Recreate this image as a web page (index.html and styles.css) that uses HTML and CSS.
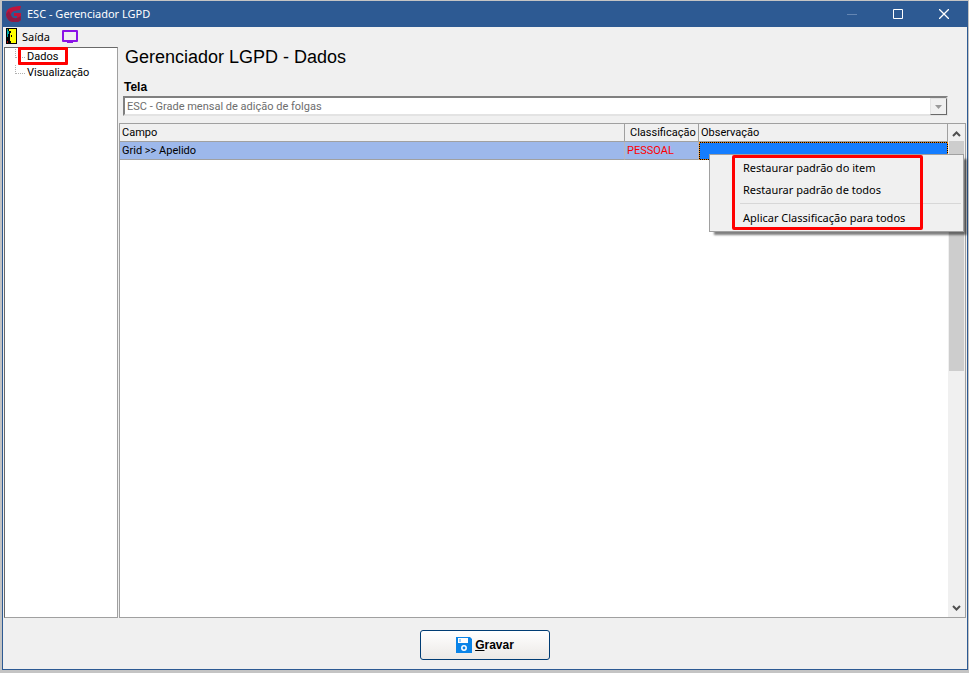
FILE: index.html
```html
<!doctype html>
<html lang="pt-BR">

<head>
  <meta charset="utf-8">
  <meta name="viewport" content="width=device-width, initial-scale=1">
  <title>ESC - Gerenciador LGPD</title>
  <link rel="stylesheet" href="styles.css">
</head>

<body>
  <div class="window">

    <header class="titlebar">
      <svg class="logo" width="18" height="18" viewBox="0 0 18 18">
        <path d="M14 1L8 2Q1 3 1 10Q2 16 8 17L13 17L16 15V8H9V11H12V13Q7 14 6 10Q6 7 9 6L15 5L16 1Z" fill="#c0143c"/>
        <path d="M1 9Q2 16 8 17L13 17L16 15V11L12 13Q7 14 6 10L4 6Z" fill="#8c1b45"/>
      </svg>
      <span class="title">ESC - Gerenciador LGPD</span>
      <button class="win-btn" aria-label="Minimizar" disabled>
        <svg width="10" height="10"><path d="M0 5.5H10" stroke="#6486b3"/></svg>
      </button>
      <button class="win-btn" aria-label="Maximizar">
        <svg width="10" height="10"><path d="M.5.5h9v9h-9z" fill="none" stroke="#fff"/></svg>
      </button>
      <button class="win-btn" aria-label="Fechar">
        <svg width="10" height="10"><path d="M0 0L10 10M10 0L0 10" stroke="#fff" stroke-width="1.3"/></svg>
      </button>
    </header>

    <nav class="menubar">
      <button class="menu-btn">
        <svg width="11" height="16" viewBox="0 0 11 16">
          <path d="M0 0H11V16H0Z" fill="#000"/>
          <path d="M3 1H10V15H5V13H4V5H5V3H3Z" fill="#ff0"/>
          <path d="M1 1H2V3H3V6H2V9H1Z" fill="#0aa"/>
          <path d="M1 13H2V15H1Z" fill="#a00"/>
          <path d="M5 7H6V9H5Z" fill="#000"/>
        </svg>
        Saída
      </button>
      <button class="menu-btn" aria-label="Tela">
        <svg width="16" height="13" viewBox="0 0 16 13">
          <path d="M1 1H15V11H1Z" fill="none" stroke="#8a14e6" stroke-width="2" stroke-linejoin="round"/>
          <path d="M5 11H11V13H5Z" fill="#8a14e6"/>
        </svg>
      </button>
    </nav>

    <div class="content">
      <aside class="sidebar">
        <ul class="tree">
          <li><a class="marked" href="#dados">Dados</a></li>
          <li><a href="#visualizacao">Visualização</a></li>
        </ul>
      </aside>

      <main class="panel">
        <div class="form">
          <h1>Gerenciador LGPD - Dados</h1>
          <label for="tela">Tela</label>
          <div class="combo">
            <select id="tela" disabled>
              <option>ESC - Grade mensal de adição de folgas</option>
            </select>
            <span class="combo-arrow"><svg width="7" height="4"><path d="M0 0H7L3.500 4Z" fill="#999"/></svg></span>
          </div>
        </div>

        <div class="grid">
          <div class="rows">
            <table>
              <thead>
                <tr>
                  <th>Campo</th>
                  <th class="col-class">Classificação</th>
                  <th class="col-obs">Observação</th>
                </tr>
              </thead>
              <tbody>
                <tr>
                  <td>Grid &gt;&gt; Apelido</td>
                  <td class="personal">PESSOAL</td>
                  <td class="active"></td>
                </tr>
              </tbody>
            </table>
          </div>
          <div class="scrollbar">
            <svg class="arrow" width="9" height="6"><path d="M1 5L4.500 1.500L8 5" fill="none" stroke="#505050" stroke-width="2"/></svg>
            <div class="thumb"></div>
            <svg class="arrow" width="9" height="6"><path d="M1 1L4.500 4.500L8 1" fill="none" stroke="#505050" stroke-width="2"/></svg>
          </div>

          <div class="context-menu">
            <button>Restaurar padrão do item</button>
            <button>Restaurar padrão de todos</button>
            <hr>
            <button>Aplicar Classificação para todos</button>
            <div class="highlight"></div>
          </div>
        </div>
      </main>
    </div>

    <footer class="footer">
      <button class="save">
        <svg width="16" height="16" viewBox="0 0 16 16">
          <path d="M0 0H14L16 2V16H0Z" fill="#0a84e8"/>
          <path d="M2 1H12V6H2Z" fill="#fff"/>
          <path d="M3 2H5V5H3Z" fill="#9fd0f7"/>
          <circle cx="8" cy="11" r="2.200" fill="none" stroke="#fff" stroke-width="1.500"/>
        </svg>
        <span><u>G</u>ravar</span>
      </button>
    </footer>

  </div>
</body>
</html>
```

FILE: styles.css
```css
*, *::before, *::after {
  box-sizing: border-box;
}

html, body {
  height: 100%;
  margin: 0;
}

body {
  padding: 1px 1px 3px 2px;
  background: #c4c4c4;
  font-family: Roboto, "Liberation Sans", Arial, sans-serif;
  font-size: 11px;
  color: #000;
}

button {
  border: 0;
  padding: 0;
  background: none;
  font: inherit;
  color: inherit;
}

svg {
  display: block;
}

.window {
  display: flex;
  flex-direction: column;
  height: 100%;
  border: 1px solid #2d5a93;
  background: #f0f0f0;
}

/* title bar */
.titlebar {
  display: flex;
  align-items: center;
  height: 25px;
  padding: 0 0 2px 2px;
  background: #2d5a93;
  color: #fff;
  font-family: "Noto Sans", "Segoe UI", sans-serif;
}

.title {
  flex: 1;
  margin-left: 4px;
}

.win-btn {
  display: flex;
  justify-content: center;
  width: 46px;
}

/* menu bar */
.menubar {
  display: flex;
  align-items: center;
  gap: 12px;
  height: 20px;
  padding: 0 0 2px 3px;
  font-family: "Noto Sans", "Segoe UI", sans-serif;
}

.menu-btn {
  display: flex;
  align-items: center;
  gap: 5px;
}

.content {
  display: flex;
  flex: 1;
  padding: 0 1px;
}

/* tree */
.sidebar {
  width: 114px;
  border: 1px solid #a0a0a0;
  border-top-color: #696969;
  border-left-color: #696969;
  background: #fff;
}

.tree {
  margin: 0;
  padding: 1px 0 0 10px;
  list-style: none;
}

.tree li {
  position: relative;
  height: 16px;
  padding-left: 12px;
  line-height: 16px;
}

.tree li::before {
  content: "";
  position: absolute;
  left: 0;
  top: 0;
  width: 10px;
  height: 9px;
  border: dotted #b0b0b0;
  border-width: 0 0 1px 1px;
}

.tree a {
  color: #000;
  text-decoration: none;
}

.marked::after {
  content: "";
  position: absolute;
  left: 3px;
  top: -2px;
  width: 50px;
  height: 18px;
  border: 3px solid #f00;
  border-radius: 1px;
}

/* right side */
.panel {
  display: flex;
  flex: 1;
  flex-direction: column;
  padding-left: 1px;
}

.form {
  padding: 0 18px 7px 4px;
}

h1 {
  margin: 0;
  padding-left: 2px;
  font-family: "Liberation Sans", Arial, sans-serif;
  font-size: 18px;
  font-weight: 400;
  line-height: 20px;
}

.form label {
  display: block;
  margin: 12px 0 1px 1px;
  font-family: "Liberation Sans", Arial, sans-serif;
  font-size: 12px;
  font-weight: 700;
  line-height: 16px;
}

.combo {
  position: relative;
}

.combo select {
  display: block;
  width: 100%;
  height: 20px;
  padding: 0 2px;
  border: 2px solid;
  border-color: #808080 #e3e3e3 #e3e3e3 #808080;
  border-radius: 0;
  background: #fff;
  color: #6d6d6d;
  font: inherit;
  opacity: 1;
  appearance: none;
}

.combo-arrow {
  display: flex;
  align-items: center;
  justify-content: center;
  position: absolute;
  top: 2px;
  right: 1px;
  bottom: 1px;
  width: 17px;
  border: 1px solid;
  border-color: #e3e3e3 #696969 #696969 #e3e3e3;
  background: #f0f0f0;
}

/* data grid */
.grid {
  position: relative;
  display: flex;
  flex: 1;
  border: 1px solid #a0a0a0;
  background: #fff;
}

.rows {
  flex: 1;
}

table {
  width: 100%;
  table-layout: fixed;
  border-collapse: separate;
  border-spacing: 0;
}

th, td {
  height: 18px;
  padding: 0 2px;
  border-right: 1px solid #a0a0a0;
  border-bottom: 1px solid #a0a0a0;
  font-weight: 400;
  text-align: left;
  white-space: nowrap;
}

th {
  background: #f0f0f0;
}

td {
  background: #9db8eb;
  border-right-color: #b8b8c0;
}

.col-class {
  width: 74px;
  padding-left: 5px;
}

.col-obs {
  width: 249px;
}

.personal {
  color: #f00;
}

td.active {
  border: 1px dotted #f08000;
  background: linear-gradient(#147dff, #147dff) padding-box, #000 border-box;
}

.scrollbar {
  display: flex;
  flex-direction: column;
  align-items: center;
  width: 17px;
  padding: 7px 0 6px;
  background: #f0f0f0;
}

.thumb {
  width: 15px;
  height: 230px;
  margin: 4px 0 auto;
  background: #cdcdcd;
}

/* popup menu over the grid */
.context-menu {
  position: absolute;
  top: 30px;
  right: 1px;
  width: 255px;
  padding: 1px 2px 3px;
  border: 1px solid #a0a0a0;
  background: #f0f0f0;
  box-shadow: 4px 4px 2px -1px rgba(0, 0, 0, .5);
  font-family: "Noto Sans", "Segoe UI", sans-serif;
}

.context-menu button {
  display: block;
  width: 100%;
  height: 22px;
  padding-left: 31px;
  text-align: left;
}

.context-menu hr {
  height: 1px;
  margin: 3px 0 2px 28px;
  border: 0;
  background: #d7d7d7;
}

.highlight {
  position: absolute;
  top: 0;
  left: 22px;
  width: 191px;
  height: 75px;
  border: 3px solid #f00;
  border-radius: 2px;
}

/* footer */
.footer {
  display: flex;
  align-items: center;
  justify-content: center;
  height: 51px;
  padding-top: 2px;
}

.save {
  display: flex;
  align-items: center;
  justify-content: center;
  gap: 3px;
  width: 130px;
  height: 30px;
  border: 1px solid #003c74;
  border-radius: 3px;
  background: linear-gradient(#fff, #ece9e6);
  font-family: "Liberation Sans", Arial, sans-serif;
  font-size: 12px;
  font-weight: 700;
}
```
